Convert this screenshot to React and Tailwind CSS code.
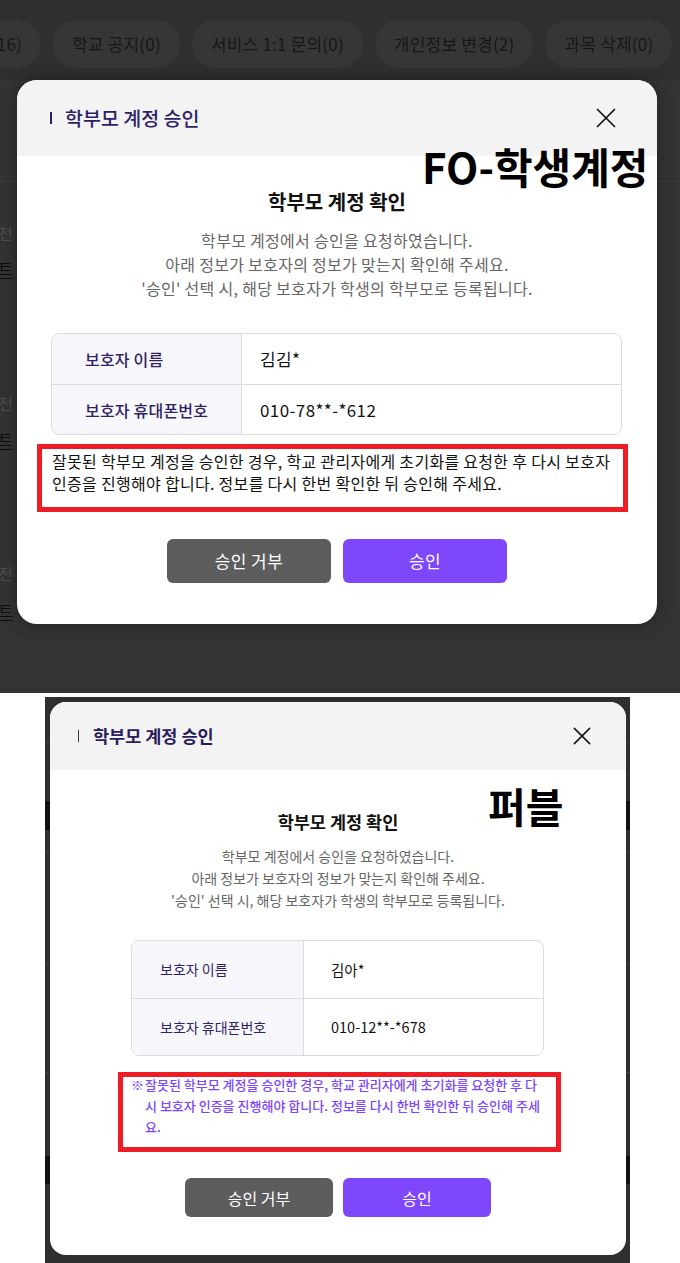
import React from "react";

const FONT = "font-['Noto_Sans_CJK_KR','Noto_Sans',sans-serif]";

function CloseIcon({ size }) {
  return (
    <svg width={size} height={size} viewBox="0 0 20 20" fill="none" stroke="#111" strokeWidth="1.7" strokeLinecap="round">
      <path d="M1.5 1.5L18.5 18.5M18.5 1.5L1.5 18.5" />
    </svg>
  );
}

function Tabs() {
  const tabs = ["학교 공지(0)", "서비스 1:1 문의(0)", "개인정보 변경(2)", "과목 삭제(0)"];
  return (
    <div className="h-[82px] bg-[#2e2f31] border-b border-[#3a3a3c] pt-[20px] flex gap-[12px] whitespace-nowrap overflow-hidden">
      <div className="h-[48px] shrink-0 w-[150px] -ml-[109px] rounded-full bg-[#363637] flex items-center justify-end pr-[19px] text-[17px] tracking-[0.2px] text-[#161616]">
        학생 문의(16)
      </div>
      {tabs.map((t) => (
        <div key={t} className="h-[48px] shrink-0 rounded-full bg-[#363637] flex items-center px-[19px] text-[17px] tracking-[0.2px] text-[#161616]">
          {t}
        </div>
      ))}
    </div>
  );
}

function Frag({ text, under, className }) {
  return (
    <div className={`flex justify-end w-[13px] whitespace-nowrap text-[16px] leading-[20px] ${className}`}>
      <span className={under ? "underline underline-offset-[3px] text-[#0e0e0e]" : "text-[#4d4d4d]"}>{text}</span>
    </div>
  );
}

function InfoTable({ rows, wrapCls, rowCls, labelCls, valueCls }) {
  return (
    <div className={`border border-[#dcdcdc] rounded-[8px] overflow-hidden ${wrapCls}`}>
      {rows.map(([l, v], i) => (
        <div key={l} className={`flex ${i ? "border-t border-[#dcdcdc]" : ""} ${rowCls}`}>
          <div className={`bg-[#f7f7fb] border-r border-[#dcdcdc] flex items-center text-[#2e1f66] ${labelCls}`}>{l}</div>
          <div className={`flex-1 flex items-center text-[#111] ${valueCls}`}>{v}</div>
        </div>
      ))}
    </div>
  );
}

function TopSection() {
  return (
    <section className="relative h-[693px] bg-[#333333] overflow-hidden">
      <Tabs />
      <div className="h-[100px] border-b border-[#3c3c3c]" />
      <Frag text="이전" className="mt-[41px]" />
      <Frag text="리스트" under className="mt-[15px]" />
      <Frag text="메일로 전" className="mt-[115px]" />
      <Frag text="리스트" under className="mt-[16px]" />
      <Frag text="메일로 전" className="mt-[114px]" />
      <Frag text="리스트" under className="mt-[17px]" />

      {/* modal */}
      <div className="absolute left-[17px] top-[80px] w-[640px] h-[544px] rounded-[20px] bg-white overflow-hidden shadow-[0_0_16px_rgba(0,0,0,0.35)] flex flex-col">
        <div className="h-[76px] shrink-0 bg-[#f3f3f3] flex items-center pl-[33px] pr-[40px]">
          <span className="w-[2px] h-[12px] bg-[#2e1f66]" />
          <span className="ml-[13px] text-[19.5px] leading-[26px] font-medium text-[#2e1f66]">학부모 계정 승인</span>
          <button className="ml-auto flex items-center justify-center w-[22px] h-[22px]">
            <CloseIcon size={20} />
          </button>
        </div>
        <div className="flex flex-col items-center pt-[33px]">
          <h2 className="text-[20px] leading-[26px] font-bold text-[#111]">학부모 계정 확인</h2>
          <div className="mt-[13px] text-center text-[16px] tracking-[0.3px] leading-[24px] text-[#666]">
            <p>학부모 계정에서 승인을 요청하였습니다.</p>
            <p>아래 정보가 보호자의 정보가 맞는지 확인해 주세요.</p>
            <p>'승인' 선택 시, 해당 보호자가 학생의 학부모로 등록됩니다.</p>
          </div>
        </div>
        <div className="mt-[33px] pl-[34px] pr-[35px]">
          <InfoTable
            rows={[["보호자 이름", "김김*"], ["보호자 휴대폰번호", "010-78**-*612"]]}
            rowCls="h-[50px]"
            labelCls="w-[190px] pl-[33px] text-[16px] tracking-[0.2px] font-medium"
            valueCls="pl-[18px] text-[17px] tracking-[0.4px]"
          />
        </div>
        <div className="relative mt-[15px] ml-[35px] w-[566px] text-[16px] tracking-[0.3px] leading-[22px] text-[#111]">
          잘못된 학부모 계정을 승인한 경우, 학교 관리자에게 초기화를 요청한 후 다시 보호자 인증을 진행해야 합니다. 정보를 다시 한번 확인한 뒤 승인해 주세요.
          <div className="absolute -left-[15px] -top-[6px] -right-[10px] -bottom-[18px] border-[5px] border-[#ee1c25] pointer-events-none" />
        </div>
        <div className="mt-[45px] flex justify-center gap-[12px]">
          <button className="w-[164px] h-[44px] rounded-[6px] bg-[#5d5d5d] text-white text-[17px] tracking-[0.4px]">승인 거부</button>
          <button className="w-[164px] h-[44px] rounded-[6px] bg-[#7f47fb] text-white text-[17px] tracking-[0.4px]">승인</button>
        </div>
      </div>

      <div className="absolute left-[422px] top-[143px] text-[42px] leading-[46px] font-bold text-black">
        FO-학생계정
      </div>
    </section>
  );
}

function BottomSection() {
  return (
    <section className="relative mt-[4px] ml-[45px] w-[585px] h-[566px] bg-[#2f2f2f] overflow-hidden">
      <div className="flex flex-col">
        <div className="h-[46px] border-b border-[#3f3f3f]" />
        <div className="h-[58px]" />
        <div className="h-[29px] bg-[#101010]" />
        <div className="h-[22px] border-b border-[#3f3f3f]" />
        <div className="h-[112px] border-b border-[#3f3f3f]" />
        <div className="h-[109px] border-b border-[#3f3f3f]" />
        <div className="h-[83px]" />
        <div className="h-[28px] bg-[#101010]" />
      </div>

      <div className="absolute left-[5px] top-[5px] w-[576px] h-[553px] rounded-[16px] bg-white overflow-hidden flex flex-col">
        <div className="h-[68px] shrink-0 bg-[#f3f3f3] flex items-center pl-[28px] pr-[34px]">
          <span className="w-[1px] h-[12px] bg-[#333]" />
          <span className="ml-[14px] text-[17.5px] leading-[24px] font-semibold text-[#2b1d5c]">학부모 계정 승인</span>
          <button className="ml-auto flex items-center justify-center w-[20px] h-[20px]">
            <CloseIcon size={18} />
          </button>
        </div>
        <div className="flex flex-col items-center pt-[40px]">
          <h2 className="text-[17.5px] leading-[24px] font-bold text-[#111]">학부모 계정 확인</h2>
          <div className="mt-[11px] text-center text-[14px] leading-[22px] text-[#666]">
            <p>학부모 계정에서 승인을 요청하였습니다.</p>
            <p>아래 정보가 보호자의 정보가 맞는지 확인해 주세요.</p>
            <p>'승인' 선택 시, 해당 보호자가 학생의 학부모로 등록됩니다.</p>
          </div>
        </div>
        <InfoTable
          rows={[["보호자 이름", "김아*"], ["보호자 휴대폰번호", "010-12**-*678"]]}
          wrapCls="mt-[29px] ml-[81px] w-[413px]"
          rowCls="h-[57px]"
          labelCls="w-[172px] pl-[28px] text-[14px]"
          valueCls="pl-[27px] text-[14.5px]"
        />
        <div className="relative mt-[18px] ml-[81px] w-[412px] flex text-[13px] leading-[21px] font-medium text-[#7c46fb]">
          <span className="w-[14px] shrink-0">※</span>
          <span className="w-[398px]">
            잘못된 학부모 계정을 승인한 경우, 학교 관리자에게 초기화를 요청한 후 다시 보호자 인증을 진행해야 합니다. 정보를 다시 한번 확인한 뒤 승인해 주세요.
          </span>
          <div className="absolute -left-[13px] -top-[2px] -right-[18px] -bottom-[15px] border-[5px] border-[#ee1c25] pointer-events-none" />
        </div>
        <div className="mt-[41px] flex justify-center gap-[10px]">
          <button className="w-[148px] h-[39px] rounded-[6px] bg-[#5d5d5d] text-white text-[16px]">승인 거부</button>
          <button className="w-[148px] h-[39px] rounded-[6px] bg-[#7f47fb] text-white text-[16px]">승인</button>
        </div>
      </div>

      <div className="absolute left-[443px] top-[86px] text-[41px] leading-[44px] font-bold text-black">
        퍼블
      </div>
    </section>
  );
}

export default function App() {
  return (
    <div className={`w-[680px] h-[1263px] bg-white overflow-hidden ${FONT}`}>
      <TopSection />
      <BottomSection />
    </div>
  );
}
